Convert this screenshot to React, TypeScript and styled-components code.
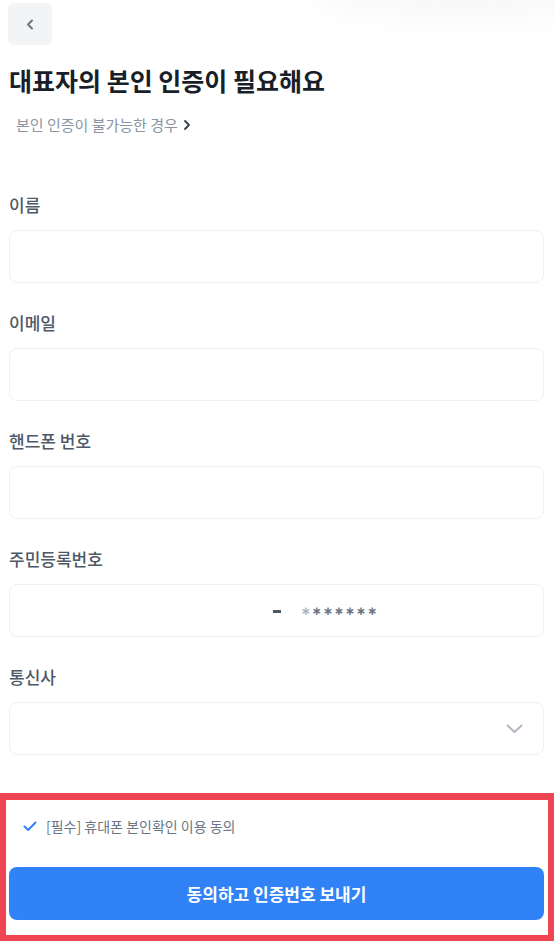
import styled, { createGlobalStyle } from 'styled-components';

const GlobalStyle = createGlobalStyle`
  html, body {
    margin: 0;
    padding: 0;
    background: #ffffff;
  }
  body {
    font-family: "Noto Sans CJK KR", "Noto Sans", sans-serif;
    color: #191f28;
    -webkit-font-smoothing: antialiased;
  }
  * {
    box-sizing: border-box;
  }
`;

const Page = styled.div`
  position: relative;
  width: 555px;
  height: 941px;
  display: flex;
  flex-direction: column;
  overflow: hidden;
  background: #fff;
`;

const TopGlow = styled.div`
  position: absolute;
  top: -34px;
  right: -60px;
  width: 300px;
  height: 52px;
  border-radius: 50%;
  background: #ededed;
  filter: blur(14px);
  opacity: 0.4;
  pointer-events: none;
`;

const Header = styled.header`
  padding: 3px 0 0 8px;
`;

const BackButton = styled.button`
  width: 44px;
  height: 42px;
  border: 0;
  border-radius: 6px;
  background: #f2f4f6;
  display: flex;
  align-items: center;
  justify-content: center;
  padding: 0;
  cursor: pointer;
`;

const Title = styled.h1`
  margin: 18px 0 0 9px;
  font-size: 25px;
  line-height: 34px;
  font-weight: 700;
  color: #191f28;
`;

const HelpLink = styled.a`
  margin: 18px 0 0 16px;
  display: flex;
  align-items: center;
  gap: 5px;
  font-size: 15px;
  line-height: 20px;
  color: #8b95a1;
  text-decoration: none;
`;

const Form = styled.div`
  margin-top: 58px;
  display: flex;
  flex-direction: column;
  gap: 28px;
`;

const Field = styled.label`
  display: flex;
  flex-direction: column;
  gap: 13px;
`;

const Label = styled.span`
  margin-left: 9px;
  font-size: 17px;
  line-height: 24px;
  font-weight: 500;
  color: #4e5968;
`;

const Box = styled.div`
  margin: 0 11px 0 9px;
  height: 53px;
  border: 1.5px solid #eef0f3;
  border-radius: 8px;
  background: #fff;
  display: flex;
  align-items: center;
  padding: 0 20px;
`;

const SplitBox = styled(Box)`
  display: grid;
  grid-template-columns: 1fr auto 1fr;
  align-items: center;
  padding: 0;
`;

const Dash = styled.span`
  width: 8px;
  height: 2.5px;
  margin-top: 2px;
  background: #4e5968;
`;

const Mask = styled.span`
  margin-left: 20px;
  display: flex;
  align-items: center;
  gap: 1px;
  font-family: "DejaVu Sans", sans-serif;
  font-weight: 700;
  font-size: 12px;
  line-height: 20px;
`;

const Star = styled.span<{ $light?: boolean }>`
  color: ${(p) => (p.$light ? '#b0b8c1' : '#6b7684')};
`;

const SelectBox = styled(Box)`
  justify-content: flex-end;
  padding-right: 20px;
`;

const Footer = styled.footer`
  margin-top: auto;
  margin-right: 1px;
  border: 6px solid #ef4452;
  border-top-width: 7px;
  padding: 0 4px 15px 3px;
  display: flex;
  flex-direction: column;
  gap: 15px;
`;

const Agree = styled.div`
  height: 52px;
  display: flex;
  align-items: center;
  gap: 9px;
  padding-left: 14px;
  font-size: 14px;
  color: #6b7684;
`;

const Submit = styled.button`
  height: 53px;
  border: 0;
  border-radius: 8px;
  background: #3182f6;
  color: #fff;
  font-family: inherit;
  font-size: 17px;
  font-weight: 700;
  cursor: pointer;
`;

const fields = ['이름', '이메일', '핸드폰 번호'];

export default function App() {
  return (
    <Page>
      <GlobalStyle />
      <TopGlow />
      <Header>
        <BackButton aria-label="뒤로">
          <svg width="8" height="11" viewBox="0 0 8 11" fill="none">
            <path d="M6 1.5 L2 5.5 L6 9.5" stroke="#6b7684" strokeWidth="2" strokeLinecap="round" strokeLinejoin="round" />
          </svg>
        </BackButton>
      </Header>
      <Title>대표자의 본인 인증이 필요해요</Title>
      <HelpLink href="#">
        본인 인증이 불가능한 경우
        <svg width="8" height="12" viewBox="0 0 8 12" fill="none">
          <path d="M2 2 L6 6 L2 10" stroke="#333d4b" strokeWidth="1.8" strokeLinecap="round" strokeLinejoin="round" />
        </svg>
      </HelpLink>

      <Form>
        {fields.map((name) => (
          <Field key={name}>
            <Label>{name}</Label>
            <Box />
          </Field>
        ))}
        <Field>
          <Label>주민등록번호</Label>
          <SplitBox>
            <span />
            <Dash />
            <Mask>
              {Array.from({ length: 7 }).map((_, i) => (
                <Star key={i} $light={i === 0}>∗</Star>
              ))}
            </Mask>
          </SplitBox>
        </Field>
        <Field>
          <Label>통신사</Label>
          <SelectBox>
            <svg width="17" height="10" viewBox="0 0 17 10" fill="none">
              <path d="M1.5 1.5 L8.5 8 L15.5 1.5" stroke="#b0b8c1" strokeWidth="2" strokeLinecap="round" strokeLinejoin="round" />
            </svg>
          </SelectBox>
        </Field>
      </Form>

      <Footer>
        <Agree>
          <svg width="14" height="11" viewBox="0 0 14 11" fill="none">
            <path d="M1.5 5.5 L5.2 9 L12.5 1.5" stroke="#3182f6" strokeWidth="2" strokeLinecap="round" strokeLinejoin="round" />
          </svg>
          [필수] 휴대폰 본인확인 이용 동의
        </Agree>
        <Submit>동의하고 인증번호 보내기</Submit>
      </Footer>
    </Page>
  );
}
